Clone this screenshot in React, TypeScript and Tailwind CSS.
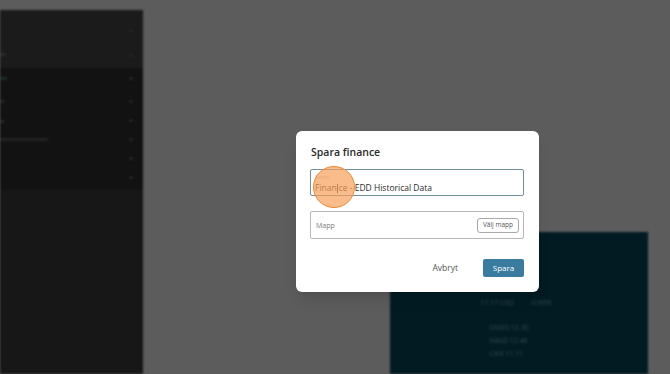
import React from 'react';

const sideDots = [29, 54, 77, 100, 119, 138, 157, 176];

export default function App() {
  return (
    <div
      className="relative w-[670px] h-[374px] overflow-hidden bg-[#5c5c5c]"
      style={{ fontFamily: '"Open Sans", "Noto Sans", sans-serif' }}
    >
      {/* Dimmed app behind the dialog */}
      <div className="flex items-start h-full">
        <div className="w-[143px] h-[364px] mt-[10px] bg-[#151515] flex flex-col blur-[1px]">
          <div className="h-[58px] bg-[#1b1b1b] relative">
            <div className="absolute left-0 top-[43px] w-[5px] h-[3px] bg-[#2c2c2c]" />
          </div>
          <div className="h-[122px] bg-[#121212] relative">
            <div className="absolute left-0 top-[9px] w-[7px] h-[3px] bg-[#1a2e2b]" />
            <div className="absolute left-0 top-[32px] w-[4px] h-[3px] bg-[#262626]" />
            <div className="absolute left-0 top-[52px] w-[4px] h-[3px] bg-[#262626]" />
            <div className="absolute left-0 top-[70px] w-[48px] h-[3px] bg-[#222222]" />
          </div>
          <div className="flex-1 bg-[#171717]" />
        </div>
        <div className="ml-[247px] mt-[232px] w-[258px] h-[142px] bg-[#021b23] flex flex-col items-center pt-[48px] blur-[1px] text-[#34474d] text-[7px] leading-none">
          <span className="ml-[-20px]">...</span>
          <div className="flex gap-[16px] ml-[-6px] mt-[12px]">
            <span>17.17 USD</span>
            <span>-0.66%</span>
          </div>
          <div className="flex flex-col gap-[6px] mt-[18px] ml-[-20px]">
            <span>OMXS 12.30</span>
            <span>NASD 12.46</span>
            <span>CAN 11.11</span>
          </div>
        </div>
      </div>

      {/* side dots on left panel */}
      {sideDots.map((y) => (
        <div
          key={y}
          className="absolute left-[129px] w-[4px] h-[3px] rounded-full bg-[#262626] blur-[0.8px]"
          style={{ top: y }}
        />
      ))}

      {/* Dialog */}
      <div className="absolute left-[296px] top-[131px] w-[243px] h-[161px] bg-white rounded-[6px] shadow-lg pl-[14px] pr-[15px] pt-[14px] flex flex-col">
        <h2 className="text-[10.5px] font-semibold text-[#2a2a2a] leading-[14px] ml-[1px]">
          Spara finance
        </h2>

        <div className="mt-[10px] h-[27px] border border-[#7090a0] rounded-[2px] flex flex-col pl-[4px] pt-[4px]">
          <span className="text-[5px] leading-[6px] text-[#c4c4c4]">Namn</span>
          <span className="text-[8.5px] leading-[11px] text-[#2b2b2b] mt-[2px]">
            Finan<span className="inline-block w-[1px] h-[9px] bg-[#333] align-middle mx-[0.5px]" />ce - EDD Historical Data
          </span>
        </div>

        <div className="mt-[15px] h-[28px] border border-[#b8b8b8] rounded-[2px] flex items-center justify-between pl-[5px] pr-[4px]">
          <span className="text-[7px] text-[#7a7a7a] mt-[2px]">Mapp</span>
          <button className="h-[15px] w-[42px] border border-[#a8a8a8] rounded-[3px] text-[6.5px] text-[#555] leading-none bg-white">
            Välj mapp
          </button>
        </div>

        <div className="mt-[20px] flex items-center justify-end gap-[25px]">
          <span className="text-[8.5px] text-[#555]">Avbryt</span>
          <button className="w-[41px] h-[18px] rounded-[2px] bg-[#3a7ca0] text-white text-[8px] leading-none">
            Spara
          </button>
        </div>
      </div>

      {/* click indicator */}
      <div className="absolute left-[313px] top-[166px] w-[42px] h-[42px] rounded-full bg-[#f6a058]/70 border-[1.5px] border-[#ef8a35]" />
    </div>
  );
}
